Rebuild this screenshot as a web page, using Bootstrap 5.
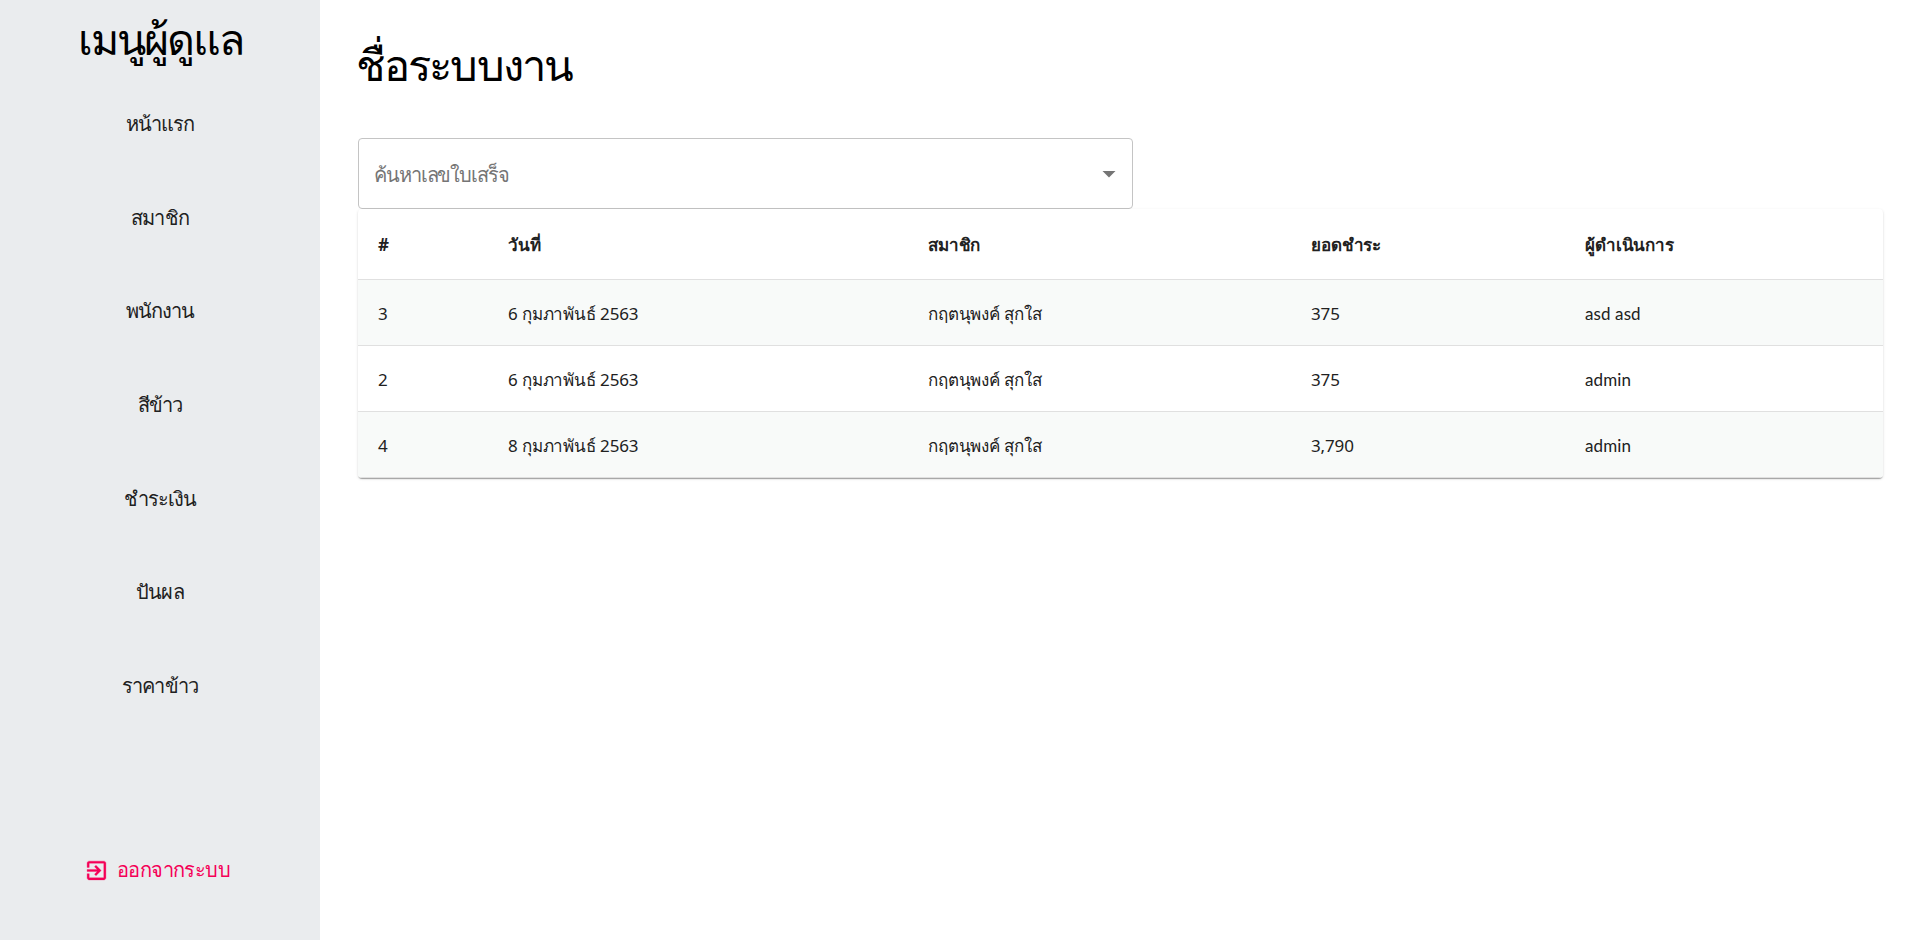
<!DOCTYPE html>
<html lang="th">
<head>
<meta charset="utf-8">
<meta name="viewport" content="width=device-width, initial-scale=1">
<title>ชื่อระบบงาน</title>
<link href="https://cdn.jsdelivr.net/npm/bootstrap@5.3.0/dist/css/bootstrap.min.css" rel="stylesheet">
<style>
body{font-family:"Noto Sans",sans-serif;color:#212121;background:#fff}
.side{width:320px;background:#eaecee}
.side-title{font-size:43px;line-height:77px;letter-spacing:-2px;color:#000}
.menu-item{height:93.700px;font-size:20px;letter-spacing:-.9px;color:#212121;text-decoration:none}
.logout{color:#f50057;font-size:20px;letter-spacing:-.6px;margin:0 6px 40px 0;height:60px}
.main-area{padding:0 36px 0 38px}
.page-title{font-size:43.500px;line-height:72px;letter-spacing:-1.9px;color:#000;padding-top:28px;margin:0 0 38px -2px}
.search-box{width:775px;height:71px;border:1px solid #c4c4c4;border-radius:4px;padding:2px 16px 0 15px;color:#757575;font-size:20px;letter-spacing:-1.1px}
.paper{border-radius:4px;box-shadow:0 2px 1px -1px rgba(0,0,0,.2),0 1px 1px 0 rgba(0,0,0,.14),0 1px 3px 0 rgba(0,0,0,.12);overflow:hidden}
.data-table{table-layout:fixed;font-size:17px;line-height:24px;letter-spacing:-.15px}
.data-table th,.data-table td{padding:4px 20px 0;height:66px;vertical-align:middle;border-bottom:1px solid #e0e0e0;color:#212121}
.data-table th{height:70px;padding-top:3px}
.data-table tbody tr:nth-child(odd) td{background:#f8faf9}
.data-table td:last-child{font-family:Lato,"Noto Sans",sans-serif;letter-spacing:.1px}
</style>
</head>
<body>
<div class="d-flex vh-100">
  <aside class="side d-flex flex-column flex-shrink-0 align-items-center">
    <h1 class="side-title mb-0 fw-normal">เมนูผู้ดูแล</h1>
    <nav class="d-flex flex-column w-100">
      <a class="menu-item d-flex align-items-center justify-content-center" href="#">หน้าแรก</a>
      <a class="menu-item d-flex align-items-center justify-content-center" href="#">สมาชิก</a>
      <a class="menu-item d-flex align-items-center justify-content-center" href="#">พนักงาน</a>
      <a class="menu-item d-flex align-items-center justify-content-center" href="#">สีข้าว</a>
      <a class="menu-item d-flex align-items-center justify-content-center" href="#">ชำระเงิน</a>
      <a class="menu-item d-flex align-items-center justify-content-center" href="#">ปันผล</a>
      <a class="menu-item d-flex align-items-center justify-content-center" href="#">ราคาข้าว</a>
    </nav>
    <a class="logout mt-auto d-flex align-items-center text-decoration-none" href="#">
      <svg width="25" height="25" viewBox="0 0 24 24" fill="currentColor" stroke="currentColor" stroke-width=".3" class="me-2"><path d="M10.09 15.59L11.5 17l5-5-5-5-1.41 1.41L12.67 11H3v2h9.67l-2.58 2.59zM19 3H5c-1.11 0-2 .9-2 2v4h2V5h14v14H5v-4H3v4c0 1.100.89 2 2 2h14c1.100 0 2-.9 2-2V5c0-1.100-.9-2-2-2z"/></svg>
      <span>ออกจากระบบ</span>
    </a>
  </aside>
  <main class="main-area flex-grow-1">
    <h1 class="page-title fw-normal">ชื่อระบบงาน</h1>
    <div class="search-box d-flex align-items-center justify-content-between">
      <span>ค้นหาเลขใบเสร็จ</span>
      <svg width="14" height="7" viewBox="0 0 14 7"><path d="M0.500 0h13L7 6.500z" fill="#757575"/></svg>
    </div>
    <div class="paper">
      <table class="data-table table mb-0">
        <colgroup><col style="width:130px"><col style="width:420px"><col style="width:383px"><col style="width:274px"><col></colgroup>
        <thead><tr><th>#</th><th>วันที่</th><th>สมาชิก</th><th>ยอดชำระ</th><th>ผู้ดำเนินการ</th></tr></thead>
        <tbody>
          <tr><td>3</td><td>6 กุมภาพันธ์ 2563</td><td>กฤตนุพงค์ สุกใส</td><td>375</td><td>asd asd</td></tr>
          <tr><td>2</td><td>6 กุมภาพันธ์ 2563</td><td>กฤตนุพงค์ สุกใส</td><td>375</td><td>admin</td></tr>
          <tr><td>4</td><td>8 กุมภาพันธ์ 2563</td><td>กฤตนุพงค์ สุกใส</td><td>3,790</td><td>admin</td></tr>
        </tbody>
      </table>
    </div>
  </main>
</div>
<script src="https://cdn.jsdelivr.net/npm/bootstrap@5.3.0/dist/js/bootstrap.bundle.min.js"></script>
</body>
</html>
